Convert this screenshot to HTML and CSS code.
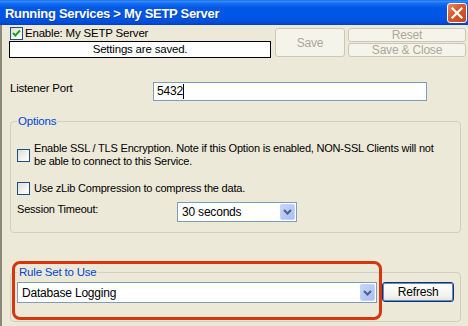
FILE: index.html
```html
<!DOCTYPE html>
<html>
<head>
<meta charset="utf-8">
<link rel="stylesheet" href="styles.css">
</head>
<body>
<div class="window">
  <div class="titlebar">
    <span class="title">Running Services &gt; My SETP Server</span>
    <div class="close">
      <svg width="18" height="18" viewBox="0 0 18 18"><path d="M4.5 4.5 L13.5 13.5 M13.5 4.5 L4.5 13.5" stroke="#fff" stroke-width="2.2" stroke-linecap="square"/></svg>
    </div>
  </div>
  <div class="content">
    <div class="top-row">
      <div class="status-col">
        <div class="check-row">
          <span class="cb checked"><svg width="11" height="11" viewBox="0 0 11 11"><path d="M2 5 L4.3 7.5 L9 2.5" fill="none" stroke="#21A121" stroke-width="2"/></svg></span>
          <span>Enable: My SETP Server</span>
        </div>
        <div class="status">Settings are saved.</div>
      </div>
      <div class="btn disabled save">Save</div>
      <div class="btn-col">
        <div class="btn disabled small">Reset</div>
        <div class="btn disabled small">Save &amp; Close</div>
      </div>
    </div>

    <div class="port-row">
      <span class="port-label">Listener Port</span>
      <div class="textbox">5432<span class="caret"></span></div>
    </div>

    <fieldset class="group options">
      <legend>Options</legend>
      <div class="opt-row ssl">
        <span class="cb"></span>
        <span>Enable SSL / TLS Encryption. Note if this Option is enabled, NON-SSL Clients will not<br>be able to connect to this Service.</span>
      </div>
      <div class="opt-row zlib">
        <span class="cb"></span>
        <span>Use zLib Compression to compress the data.</span>
      </div>
      <div class="timeout-row">
        <span class="timeout-label">Session Timeout:</span>
        <div class="combo timeout">
          <span class="combo-text">30 seconds</span>
          <span class="dd"><svg width="9" height="6" viewBox="0 0 9 6"><path d="M1 1 L4.5 4.5 L8 1" fill="none" stroke="#4D6185" stroke-width="2"/></svg></span>
        </div>
      </div>
    </fieldset>

    <fieldset class="group ruleset">
      <legend>Rule Set to Use</legend>
      <div class="rule-row">
        <div class="combo rules">
          <span class="combo-text">Database Logging</span>
          <span class="dd"><svg width="9" height="6" viewBox="0 0 9 6"><path d="M1 1 L4.5 4.5 L8 1" fill="none" stroke="#4D6185" stroke-width="2"/></svg></span>
        </div>
        <div class="btn refresh">Refresh</div>
      </div>
    </fieldset>
  </div>
  <div class="highlight"></div>
</div>
</body>
</html>
```

FILE: styles.css
```css
html, body {
  margin: 0;
  padding: 0;
  background: #ECE9D8;
}

.window {
  position: relative;
  width: 468px;
  height: 326px;
  overflow: hidden;
  background: #ECE9D8;
  font-family: "Liberation Sans", Arial, sans-serif;
  font-size: 11px;
  letter-spacing: -0.2px;
  color: #000;
}

.titlebar {
  height: 25px;
  display: flex;
  align-items: center;
  justify-content: space-between;
  padding: 0 1px 0 5px;
  box-sizing: border-box;
  background: linear-gradient(to bottom, #0A5DD8 0px, #3D95FF 1px, #1770F5 3px, #0058E6 8px, #0055E5 18px, #004CD6 23px, #003FB8 25px);
}

.title {
  color: #fff;
  font-weight: bold;
  font-size: 13px;
  letter-spacing: -0.3px;
  margin-top: 2px;
  text-shadow: 1px 1px 0 #0A3FB0;
}

.close {
  width: 20px;
  height: 20px;
  box-sizing: border-box;
  border: 1px solid #fff;
  border-radius: 3px;
  background: linear-gradient(135deg, #ED8A62 0%, #DC5A2E 40%, #C8431A 100%);
  display: flex;
  align-items: center;
  justify-content: center;
  margin-top: 1px;
}

.content {
  height: 301px;
  border-left: 2px solid #8C8878;
  box-sizing: border-box;
}

.top-row {
  display: flex;
  align-items: flex-start;
  padding-top: 2px;
}

.status-col {
  margin-left: 7px;
  width: 262px;
}

.check-row {
  display: flex;
  align-items: center;
  height: 13px;
  line-height: 13px;
  gap: 2px;
  padding-left: 1px;
  font-size: 11.5px;
}

.cb {
  width: 13px;
  height: 13px;
  box-sizing: border-box;
  border: 1px solid #1C5180;
  background: linear-gradient(135deg, #DCDCD7 0%, #F4F4F0 60%, #FFFFFF 100%);
  display: flex;
  align-items: center;
  justify-content: center;
  flex: none;
}

.status {
  margin-top: 1px;
  height: 17px;
  box-sizing: border-box;
  border: 1px solid #000;
  background: #fff;
  text-align: center;
  line-height: 15px;
  font-size: 11.5px;
}

.btn {
  box-sizing: border-box;
  border-radius: 3px;
  display: flex;
  align-items: center;
  justify-content: center;
}

.btn.disabled {
  border: 1px solid #CBC8BA;
  background: #F5F4EA;
  color: #ACA899;
}

.save {
  margin-top: 1px;
  margin-left: 4px;
  width: 70px;
  height: 29px;
  font-size: 12px;
}

.btn-col {
  margin-top: 1px;
  margin-left: 3px;
  width: 118px;
  display: flex;
  flex-direction: column;
  gap: 1px;
}

.btn.small {
  height: 14px;
  font-size: 12px;
  line-height: 12px;
}

.port-row {
  display: flex;
  align-items: flex-start;
  margin-top: 24px;
  padding-left: 8px;
}

.port-label {
  width: 143px;
  line-height: 13px;
  font-size: 11.5px;
}

.textbox {
  width: 274px;
  height: 19px;
  box-sizing: border-box;
  border: 1px solid #7F9DB9;
  background: #fff;
  padding-left: 3px;
  font-size: 12px;
  line-height: 17px;
  display: flex;
  align-items: center;
}

.caret {
  display: inline-block;
  width: 1px;
  height: 15px;
  background: #000;
}

.group {
  margin: 0 0 0 8px;
  width: 451px;
  box-sizing: border-box;
  border: 1px solid #D0D0BF;
  border-radius: 4px;
  min-width: 0;
}

.group legend {
  color: #0046D5;
  line-height: 13px;
  padding: 0 1px;
  font-size: 11.5px;
}

.options {
  margin-top: 14px;
  padding: 14px 6px 10px 6px;
}

.opt-row {
  display: flex;
  align-items: center;
  gap: 4px;
  line-height: 13px;
}

.zlib {
  margin-top: 14px;
}

.timeout-row {
  display: flex;
  align-items: flex-start;
  margin-top: 7px;
}

.timeout-label {
  width: 160px;
  line-height: 13px;
  padding-top: 1px;
}

.combo {
  box-sizing: border-box;
  border: 1px solid #7F9DB9;
  background: #fff;
  display: flex;
  align-items: stretch;
  padding: 1px;
}

.combo-text {
  flex: 1;
  display: flex;
  align-items: center;
  padding-left: 3px;
  font-size: 12px;
}

.dd {
  width: 15px;
  box-sizing: border-box;
  border: 1px solid #C3D3FD;
  border-radius: 2px;
  background: linear-gradient(135deg, #C6D6FC 0%, #B4C8F6 60%, #A9BFF2 100%);
  display: flex;
  align-items: center;
  justify-content: center;
}

.timeout {
  width: 120px;
  height: 20px;
}

.ruleset {
  margin-top: 33px;
  padding: 3px 6px 18px 6px;
}

.ruleset legend {
  padding: 0 1px 0 2px;
}

.rule-row {
  display: flex;
  align-items: flex-start;
}

.rules {
  width: 362px;
  height: 21px;
}

.btn.refresh {
  margin-left: 5px;
  width: 72px;
  height: 20px;
  border: 1px solid #003C74;
  background: linear-gradient(to bottom, #FFFFFF 0%, #F4F3EE 70%, #E3E2DA 100%);
  box-shadow: inset 0 0 0 1px #6F86C0;
  font-size: 12px;
}

.highlight {
  position: absolute;
  left: 12px;
  top: 261px;
  width: 370px;
  height: 59px;
  box-sizing: border-box;
  border: 3px solid #D5360E;
  border-radius: 8px;
  pointer-events: none;
}
```
